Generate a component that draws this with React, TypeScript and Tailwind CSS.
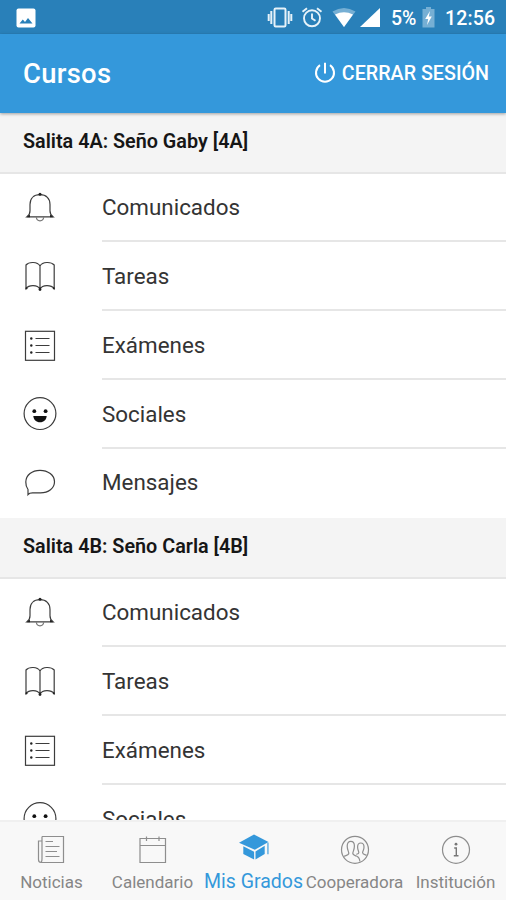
import React from 'react';

type IconProps = { children: React.ReactNode };

const RowIcon = ({ children }: IconProps) => (
  <svg className="h-10 w-10 shrink-0" viewBox="0 0 40 40" fill="none" stroke="#3c3c3c" strokeWidth="1.2">
    {children}
  </svg>
);

const TabIcon = ({ children }: IconProps) => (
  <svg className="h-8 w-8 shrink-0" viewBox="0 0 32 32" fill="none" stroke="#8e8e8e" strokeWidth="1.2">
    {children}
  </svg>
);

const Bell = () => (
  <RowIcon>
    <path d="M7 28.8H33C30.5 27 30 25.4 30 22.8V16.5C30 10.5 26.3 6.7 20 6.7S10 10.5 10 16.5V22.8C10 25.4 9.5 27 7 28.8Z" />
    <path d="M16.3 29.3C16.8 34 23.2 34 23.7 29.3" stroke="#777" />
    <circle cx="20" cy="6.3" r="1.5" fill="#222" stroke="none" />
    <path d="M7 29.3L10 26.4V29.3ZM33 29.3L30 26.4V29.3Z" fill="#222" stroke="none" />
  </RowIcon>
);

const Book = () => (
  <RowIcon>
    <path d="M20 9C17.5 4.5 9 4.5 6 8V31.5C9 27.5 17.5 27.5 20 32C22.5 27.5 31 27.5 34.2 31.5V8C31 4.5 22.5 4.5 20 9ZM20 9V32.5" />
    <g fill="#222" stroke="none">
      <circle cx="6.5" cy="31.3" r="1.1" />
      <circle cx="20" cy="32.5" r="1.4" />
      <circle cx="33.8" cy="31.3" r="1.1" />
    </g>
  </RowIcon>
);

const ListBox = () => (
  <RowIcon>
    <rect x="5.5" y="5.3" width="29" height="29" />
    <path d="M15.5 12.5H29.5M15.5 19.5H29.5M15.5 26.5H29.5" />
    <g fill="#222" stroke="none">
      <circle cx="11.3" cy="12.5" r="1.2" />
      <circle cx="11.3" cy="19.5" r="1.2" />
      <circle cx="11.3" cy="26.5" r="1.2" />
    </g>
  </RowIcon>
);

const Smile = () => (
  <RowIcon>
    <circle cx="20" cy="19.6" r="15.9" />
    <g fill="#111" stroke="none">
      <circle cx="14.3" cy="17.2" r="1.9" />
      <circle cx="25.6" cy="17.2" r="1.9" />
      <path d="M13.3 22H26.7C26.4 25.8 23.8 28.3 20 28.3S13.6 25.8 13.3 22Z" />
    </g>
  </RowIcon>
);

const Chat = () => (
  <RowIcon>
    <path d="M8 31.5V26.5C6.6 24.6 5.7 22.2 5.8 19C6 12 12 7.3 20 7.3S34.5 12.2 34.5 18.7S28.5 29.8 20.5 29.8H12.5C10.5 29.8 9 30.3 8 31.5Z" />
  </RowIcon>
);

const rows = [
  { label: 'Comunicados', icon: <Bell /> },
  { label: 'Tareas', icon: <Book /> },
  { label: 'Exámenes', icon: <ListBox /> },
  { label: 'Sociales', icon: <Smile /> },
  { label: 'Mensajes', icon: <Chat /> },
];

const Course = ({ title }: { title: string }) => (
  <section className="shrink-0">
    <h2 className="flex h-[61px] items-center border-b-2 border-[#e6e6e6] bg-[#f4f4f4] pb-px pl-[23px] text-[19.8px] font-semibold text-[#161616]">
      {title}
    </h2>
    <ul>
      {rows.map((row, i) => (
        <li key={row.label} className="flex h-[68.8px] pl-5">
          <div className="flex items-center">{row.icon}</div>
          <div
            className={`ml-[42px] flex flex-1 items-center text-[22.4px] text-[#343434] ${
              i < rows.length - 1 ? 'border-b-2 border-[#e6e6e6] pt-[2.4px]' : ''
            }`}
          >
            {row.label}
          </div>
        </li>
      ))}
    </ul>
  </section>
);

const StatusBar = () => (
  <div className="flex h-[34px] shrink-0 items-center bg-[#2980b9] pl-4 pr-[11px] text-white">
    <svg className="mt-px h-5 w-5" viewBox="0 0 20 20">
      <rect x="0.5" y="0.5" width="19" height="19" rx="2" fill="#fff" />
      <path d="M3.5 15.5L6.8 11.5L9 14L12 10L16.5 15.5Z" fill="#2980b9" />
    </svg>
    <svg className="ml-auto h-6 w-[26px]" viewBox="0 0 26 24" fill="none" stroke="#e6f2f9" strokeWidth="2">
      <rect x="7.5" y="3.5" width="11" height="18" rx="1.2" />
      <path d="M4.3 6V19M21.7 6V19M1.7 9V16M24.3 9V16" />
    </svg>
    <svg className="ml-2 h-6 w-[22px]" viewBox="0 0 22 24" fill="none" stroke="#e6f2f9" strokeWidth="1.9">
      <circle cx="11" cy="13.3" r="8" />
      <path d="M11 8.5V13.5L14.5 15.7M1.5 6.8L6 3.2M20.5 6.8L16 3.2" />
    </svg>
    <svg className="ml-[9px] h-6 w-6" viewBox="0 0 24 24">
      <path d="M0.5 6.5Q12 -0.5 23.5 6.5L12 22Z" fill="#76afd4" />
      <path d="M3 9.5Q12 5 21 9.5L12 22Z" fill="#fff" />
    </svg>
    <svg className="ml-1 h-6 w-5" viewBox="0 0 20 24">
      <path d="M20 3V22H0Z" fill="#fff" />
    </svg>
    <span className="ml-[11px] w-[27px] whitespace-nowrap pt-[3px] text-[19.5px] font-medium tracking-[-0.2px]">5%</span>
    <svg className="ml-1 h-6 w-[13px]" viewBox="0 0 13 24">
      <path d="M0.5 4H4V2H9V4H12.5V22.5H0.5Z" fill="#76afd4" />
      <path d="M8 6L3.2 14H6.2L5 20L9.8 11.5H6.8Z" fill="#fff" />
    </svg>
    <span className="ml-[10px] w-[50px] whitespace-nowrap pt-[3px] text-[19.5px] font-medium tracking-[0.15px]">12:56</span>
  </div>
);

const TabBar = () => {
  const tabs = [
    {
      label: 'Noticias',
      icon: (
        <TabIcon>
          <path d="M6 2.5H27.5V28.5H5C3 28.5 2.5 27.5 2.5 25.5V7H6M6 2.5V25C6 27 5.7 28.5 4.3 28.5M9.5 7.5H17M9.5 12.5H23.5M9.5 17.5H21M9.5 22.5H23.5" />
        </TabIcon>
      ),
    },
    {
      label: 'Calendario',
      icon: (
        <TabIcon>
          <path d="M3 4.5H28.5V28.5H3ZM3 11.5H28.5M9.5 2.5V7M22 2.5V7" />
        </TabIcon>
      ),
    },
    {
      label: 'Mis Grados',
      icon: (
        <TabIcon>
          <g fill="#3498db" stroke="none">
            <path d="M1 8.7L16 0.5L30.5 8L16.8 15.8Z" />
            <path d="M5.3 12.3L16.1 17.8V25.4L5.3 20Z" />
            <path d="M26.7 11.8L17.5 17.4V25.4L26.7 20Z" />
            <path d="M29.4 9.3L30.5 8.6V20.3H29.4Z" />
          </g>
        </TabIcon>
      ),
      active: true,
    },
    {
      label: 'Cooperadora',
      icon: (
        <TabIcon>
          <circle cx="16" cy="15.8" r="13.5" />
          <path d="M5 22.2C7 21.5 9.8 21.2 9.8 19.3C9.8 17.5 8.2 16 8.2 12C8.2 9 9.5 7.3 11.8 7.3S15.4 9 15.4 12C15.4 16 13.8 17.5 13.8 19.3C13.8 21.2 16 21.5 17.8 22.2" />
          <path d="M17.3 20.3C18.6 20 19.8 19.8 19.8 18.7C19.8 17 18.6 16 18.6 13C18.6 10.4 19.8 9 21.8 9S25 10.4 25 13C25 16 23.6 17 23.6 18.7C23.6 20.4 26 20.6 27.7 21.3M17.8 22.2C19.8 23 20.6 24.5 20.9 27.5" />
        </TabIcon>
      ),
    },
    {
      label: 'Institución',
      icon: (
        <TabIcon>
          <circle cx="16" cy="15.8" r="13.5" />
          <circle cx="16" cy="10.2" r="1.4" fill="#777" stroke="none" />
          <path d="M14.2 14H16.3V21.5M13.8 21.8H18.5" stroke="#777" strokeWidth="1.4" />
        </TabIcon>
      ),
    },
  ];

  return (
    <nav className="grid h-20 shrink-0 grid-cols-5 border-t-2 border-[#f0f0f0] bg-[#f8f8f8] pl-px">
      {tabs.map((tab) => (
        <div key={tab.label} className="flex min-w-0 flex-col items-center pt-3">
          {tab.icon}
          <span
            className={`mt-1 whitespace-nowrap leading-6 ${
              tab.active ? 'text-[19.5px] text-[#3498db]' : 'text-[17px] text-[#868686]'
            }`}
          >
            {tab.label}
          </span>
        </div>
      ))}
    </nav>
  );
};

export default function App() {
  return (
    <div className="flex h-[900px] w-[506px] flex-col overflow-hidden bg-white font-['Roboto',sans-serif]">
      <StatusBar />
      <header className="z-10 flex h-[78.6px] shrink-0 items-center justify-between bg-[#3498db] pl-[23px] pr-[17px] text-white shadow-[0_1px_3px_rgba(0,0,0,0.35)]">
        <h1 className="pt-[3px] text-[27.4px] font-medium tracking-[0.3px]">Cursos</h1>
        <button className="flex items-center text-[19.7px] font-medium">
          <svg className="mr-[6px] h-[22px] w-[22px]" viewBox="0 0 22 22" fill="none" stroke="#fff" strokeWidth="2">
            <path d="M11 0.8V11.5M6 3.2A9 9 0 1 0 16 3.2" />
          </svg>
          CERRAR SESIÓN
        </button>
      </header>
      <main className="min-h-0 flex-1 overflow-hidden">
        <Course title="Salita 4A: Seño Gaby [4A]" />
        <Course title="Salita 4B: Seño Carla [4B]" />
      </main>
      <TabBar />
    </div>
  );
}
